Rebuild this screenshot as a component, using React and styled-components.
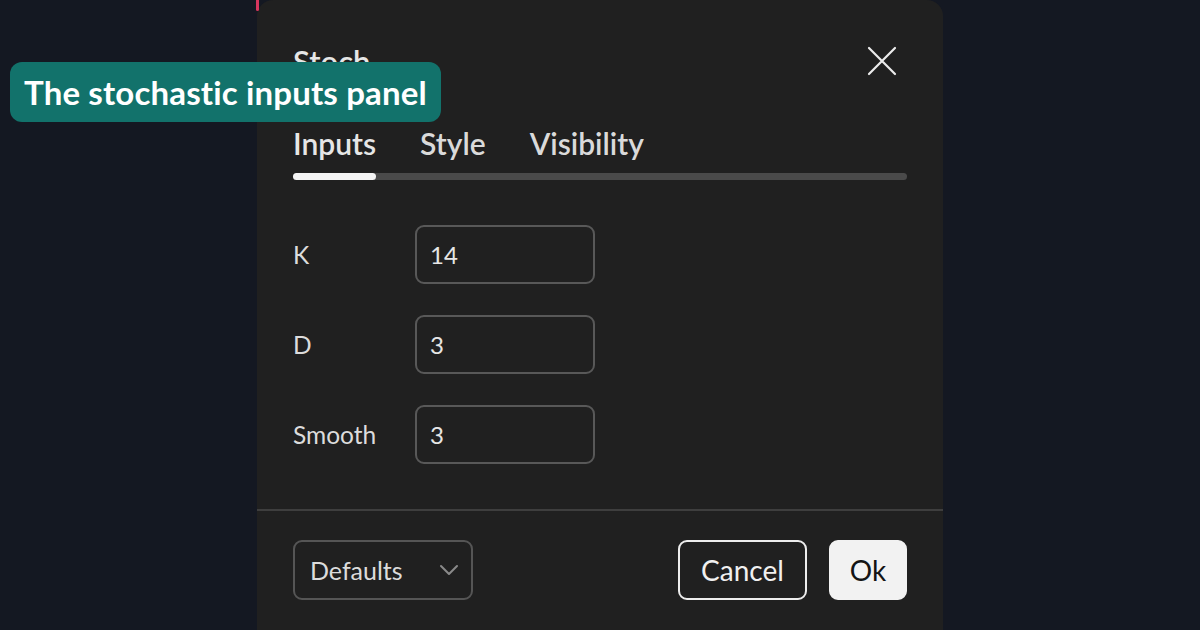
import React from "react";
import styled, { createGlobalStyle } from "styled-components";

const GlobalStyle = createGlobalStyle`
  html, body {
    margin: 0;
    padding: 0;
    background: #141822;
    overflow: hidden;
  }
  body {
    font-family: Lato, "Noto Sans", "Liberation Sans", sans-serif;
    color: #e3e3e3;
  }
`;

const Page = styled.div`
  position: relative;
  width: 1200px;
  height: 630px;
  overflow: hidden;
`;

// pink chart line peeking out behind the dialog
const Peek = styled.div`
  position: absolute;
  left: 256px;
  top: 0;
  width: 3px;
  height: 11px;
  background: #d8365e;
  border-radius: 0 0 2px 2px;
`;

const Badge = styled.div`
  position: absolute;
  left: 10px;
  top: 62px;
  height: 60px;
  padding: 0 14px;
  display: flex;
  align-items: center;
  background: #12726b;
  border-radius: 12px;
  color: #fff;
  font-size: 33px;
  font-weight: 700;
  letter-spacing: 0.15px;
  z-index: 2;
`;

const Dialog = styled.div`
  margin-left: 257px;
  width: 686px;
  height: 660px;
  background: #202020;
  border-radius: 16px 16px 0 0;
  display: flex;
  flex-direction: column;
`;

const Header = styled.div`
  display: flex;
  align-items: center;
  justify-content: space-between;
  padding: 36px 36px 0;
  height: 50px;
`;

const Title = styled.h2`
  margin: 0;
  font-size: 31px;
  font-weight: 600;
  color: #e6e6e6;
  line-height: 50px;
`;

const CloseButton = styled.button`
  width: 40px;
  height: 40px;
  margin-right: 5px;
  display: flex;
  align-items: center;
  justify-content: center;
  background: none;
  border: 0;
  padding: 0;
  cursor: pointer;
`;

const Tabs = styled.div`
  display: flex;
  gap: 44px;
  padding: 0 36px;
  margin-top: 37px;
`;

const Tab = styled.div`
  font-size: 30px;
  font-weight: 600;
  line-height: 40px;
  color: ${(p) => (p.$active ? "#e6e6e6" : "#dadada")};
`;

const Track = styled.div`
  margin: 10px 36px 0;
  height: 7px;
  border-radius: 4px;
  background: #4a4a4a;
  display: flex;
`;

const Indicator = styled.div`
  width: 83px;
  height: 100%;
  border-radius: 4px;
  background: #f4f4f4;
`;

const Form = styled.div`
  display: flex;
  flex-direction: column;
  gap: 31px;
  padding: 45px 36px 45px;
`;

const Row = styled.div`
  display: grid;
  grid-template-columns: 122px 180px;
  align-items: center;
`;

const Label = styled.span`
  font-size: 24.5px;
  color: #dcdcdc;
`;

const Field = styled.div`
  height: 59px;
  box-sizing: border-box;
  border: 2px solid #585858;
  border-radius: 9px;
  display: flex;
  align-items: center;
  padding: 0 13px;
  font-size: 24px;
  color: #e6e6e6;
`;

const Footer = styled.div`
  border-top: 2px solid #3e3e3e;
  padding: 29px 36px 0;
  display: flex;
  align-items: center;
`;

const Select = styled.div`
  width: 180px;
  height: 60px;
  box-sizing: border-box;
  border: 2px solid #555;
  border-radius: 9px;
  display: flex;
  align-items: center;
  justify-content: space-between;
  padding: 0 12px 0 15px;
  font-size: 25px;
  color: #dcdcdc;
`;

const Actions = styled.div`
  margin-left: auto;
  display: flex;
  gap: 22px;
`;

const Button = styled.button`
  height: 60px;
  box-sizing: border-box;
  border-radius: 9px;
  font-family: inherit;
  font-size: 28px;
  padding: 0 ${(p) => (p.$primary ? "17px" : "20px")};
  min-width: ${(p) => (p.$primary ? "78px" : "129px")};
  border: 2px solid ${(p) => (p.$primary ? "#f2f2f2" : "#ededed")};
  background: ${(p) => (p.$primary ? "#f2f2f2" : "transparent")};
  color: ${(p) => (p.$primary ? "#141414" : "#f0f0f0")};
  cursor: pointer;
`;

const inputs = [
  { label: "K", value: "14" },
  { label: "D", value: "3" },
  { label: "Smooth", value: "3" },
];

const App = () => {
  return (
    <>
      <GlobalStyle />
      <Page>
        <Peek />
        <Badge>The stochastic inputs panel</Badge>
        <Dialog>
          <Header>
            <Title>Stoch</Title>
            <CloseButton aria-label="Close">
              <svg width="30" height="30" viewBox="0 0 30 30">
                <path
                  d="M2 2 L28 28 M28 2 L2 28"
                  stroke="#ececec"
                  strokeWidth="2.2"
                  strokeLinecap="round"
                />
              </svg>
            </CloseButton>
          </Header>

          <Tabs>
            <Tab $active>Inputs</Tab>
            <Tab>Style</Tab>
            <Tab>Visibility</Tab>
          </Tabs>
          <Track>
            <Indicator />
          </Track>

          <Form>
            {inputs.map((item) => (
              <Row key={item.label}>
                <Label>{item.label}</Label>
                <Field>{item.value}</Field>
              </Row>
            ))}
          </Form>

          <Footer>
            <Select>
              Defaults
              <svg width="20" height="12" viewBox="0 0 20 12">
                <path
                  d="M2 2 L10 10 L18 2"
                  fill="none"
                  stroke="#8a8a8a"
                  strokeWidth="2"
                  strokeLinecap="round"
                  strokeLinejoin="round"
                />
              </svg>
            </Select>
            <Actions>
              <Button>Cancel</Button>
              <Button $primary>Ok</Button>
            </Actions>
          </Footer>
        </Dialog>
      </Page>
    </>
  );
};

export default App;
